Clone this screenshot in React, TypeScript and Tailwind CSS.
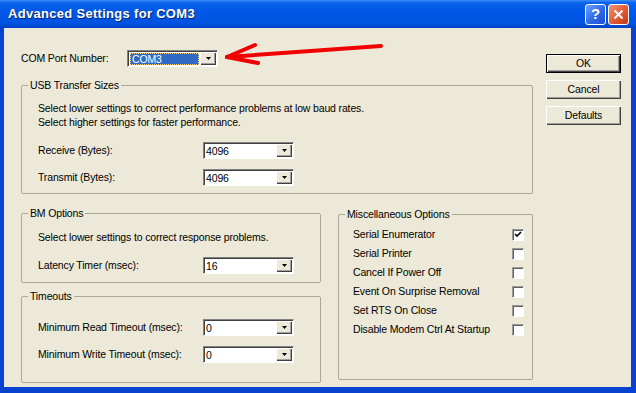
import React from "react";

const font = { fontFamily: '"Liberation Sans", Arial, sans-serif' };

function Arrow() {
  return (
    <svg width="5" height="3" viewBox="0 0 5 3">
      <path d="M0 0h5L2.5 3z" fill="#000" />
    </svg>
  );
}

function Combo({ value, selected = false }: { value: string; selected?: boolean }) {
  return (
    <div className="flex h-[17px] w-[91px] border border-t-[#828282] border-l-[#828282] border-b-white border-r-white bg-white shadow-[inset_1px_1px_0_#404040]">
      <div className="flex flex-1 items-center pl-[2px] pt-[1px]">
        {selected ? (
          <span className="flex h-[12px] w-[69px] items-center border border-dotted border-[#ffd27a] bg-[#316ac5] pl-[1px] leading-none text-white">
            {value}
          </span>
        ) : (
          <span className="leading-none">{value}</span>
        )}
      </div>
      <div className="m-[1px] ml-0 flex w-[16px] items-center justify-center bg-[#ece9d8] shadow-[inset_1px_1px_0_#fff,inset_-1px_-1px_0_#404040,inset_-2px_-2px_0_#a0a0a0]">
        <Arrow />
      </div>
    </div>
  );
}

function Btn({ label, def = false }: { label: string; def?: boolean }) {
  return (
    <div
      className={
        def
          ? "flex h-[19px] w-[75px] items-center justify-center border border-black bg-[#ece9d8] shadow-[inset_1px_1px_0_#fff,inset_-1px_-1px_0_#404040,inset_-2px_-2px_0_#a0a0a0]"
          : "flex h-[19px] w-[75px] items-center justify-center bg-[#ece9d8] shadow-[inset_1px_1px_0_#fff,inset_-1px_-1px_0_#404040,inset_-2px_-2px_0_#a0a0a0]"
      }
    >
      {label}
    </div>
  );
}

function Check({ checked = false }: { checked?: boolean }) {
  return (
    <div className="flex h-[12px] w-[12px] items-center justify-center border border-t-[#9a9a9a] border-l-[#9a9a9a] border-b-white border-r-white bg-white shadow-[inset_1px_1px_0_#606060]">
      {checked && (
        <svg width="8" height="7" viewBox="0 0 8 7">
          <path d="M1 3l2 2 4-4" stroke="#000" strokeWidth="1.6" fill="none" />
        </svg>
      )}
    </div>
  );
}

function Group({ title, className, children }: { title: string; className: string; children: React.ReactNode }) {
  return (
    <fieldset className={"rounded-[2px] border border-[#aca899] " + className}>
      <legend className="ml-[6px] px-[2px] leading-[13px]">{title}</legend>
      {children}
    </fieldset>
  );
}

function Row({ label, value }: { label: string; value: string }) {
  return (
    <div className="flex items-center">
      <span className="w-[165px]">{label}</span>
      <Combo value={value} />
    </div>
  );
}

const misc = [
  ["Serial Enumerator", true],
  ["Serial Printer", false],
  ["Cancel If Power Off", false],
  ["Event On Surprise Removal", false],
  ["Set RTS On Close", false],
  ["Disable Modem Ctrl At Startup", false],
] as const;

export default function App() {
  return (
    <div className="relative flex h-[393px] w-[636px] flex-col bg-[#0842d0] text-[10.5px] tracking-[-0.15px] text-black" style={font}>
      {/* Title bar */}
      <div className="flex h-[28px] items-center bg-[linear-gradient(to_bottom,#3c8cf8_0%,#0a62ec_10%,#0056e6_45%,#0053e0_85%,#0040c0_100%)] pl-[8px] pr-[7px]">
        <span className="flex-1 text-[13px] font-bold tracking-[0.3px] text-white [text-shadow:1px_1px_0_#0a246a]">
          Advanced Settings for COM3
        </span>
        <div className="flex gap-[2px]">
          <div className="flex h-[21px] w-[21px] items-center justify-center rounded-[3px] border border-white bg-[linear-gradient(135deg,#6fa1ff,#2a64e6_60%,#1d4fd0)] text-[15px] font-bold tracking-normal text-white">
            ?
          </div>
          <div className="flex h-[21px] w-[21px] items-center justify-center rounded-[3px] border border-white bg-[linear-gradient(135deg,#f0947a,#e0542e_60%,#c43a16)]">
            <svg width="11" height="11" viewBox="0 0 11 11">
              <path d="M1.5 1.5l8 8M9.5 1.5l-8 8" stroke="#fff" strokeWidth="2" />
            </svg>
          </div>
        </div>
      </div>

      {/* Body */}
      <div className="mb-[6px] ml-[4px] mr-[5px] flex flex-1 bg-[#ece9d8] pl-[17px] pt-[22px]">
        <div className="flex w-[512px] flex-col">
          <div className="flex h-[17px] items-center">
            <span className="w-[106px]">COM Port Number:</span>
            <Combo value="COM3" selected />
          </div>

          <Group title="USB Transfer Sizes" className="mt-[12px]">
            <div className="flex flex-col pb-[7px] pl-[16px] pt-[9px]">
              <p className="leading-[14px]">Select lower settings to correct performance problems at low baud rates.</p>
              <p className="leading-[14px]">Select higher settings for faster performance.</p>
              <div className="mt-[13px] flex flex-col gap-[10px]">
                <Row label="Receive (Bytes):" value="4096" />
                <Row label="Transmit (Bytes):" value="4096" />
              </div>
            </div>
          </Group>

          <div className="mt-[13px] flex">
            <div className="flex w-[300px] flex-col">
              <Group title="BM Options" className="">
                <div className="flex flex-col pb-[8px] pl-[16px] pt-[10px]">
                  <p className="leading-[14px]">Select lower settings to correct response problems.</p>
                  <div className="mt-[13px]">
                    <Row label="Latency Timer (msec):" value="16" />
                  </div>
                </div>
              </Group>
              <Group title="Timeouts" className="mt-[7px]">
                <div className="flex flex-col gap-[10px] pb-[19px] pl-[16px] pt-[16px]">
                  <Row label="Minimum Read Timeout (msec):" value="0" />
                  <Row label="Minimum Write Timeout (msec):" value="0" />
                </div>
              </Group>
            </div>

            <Group title="Miscellaneous Options" className="ml-[17px] mt-[1px] h-[172px] w-[195px]">
              <div className="flex flex-col pl-[14px] pt-[4px]">
                {misc.map(([label, checked]) => (
                  <div key={label} className="flex h-[19px] items-center">
                    <span className="w-[159px]">{label}</span>
                    <Check checked={checked} />
                  </div>
                ))}
              </div>
            </Group>
          </div>
        </div>

        <div className="ml-[13px] mt-[4px] flex flex-col gap-[7px]">
          <Btn label="OK" def />
          <Btn label="Cancel" />
          <Btn label="Defaults" />
        </div>
      </div>

      {/* Red annotation arrow */}
      <svg className="pointer-events-none absolute left-0 top-0" width="636" height="393">
        <g stroke="#f00000" strokeWidth="4" strokeLinecap="round" fill="none">
          <path d="M381 46L227 57" />
          <path d="M227 57L255 45" />
          <path d="M227 57L258 63" />
        </g>
      </svg>
    </div>
  );
}
